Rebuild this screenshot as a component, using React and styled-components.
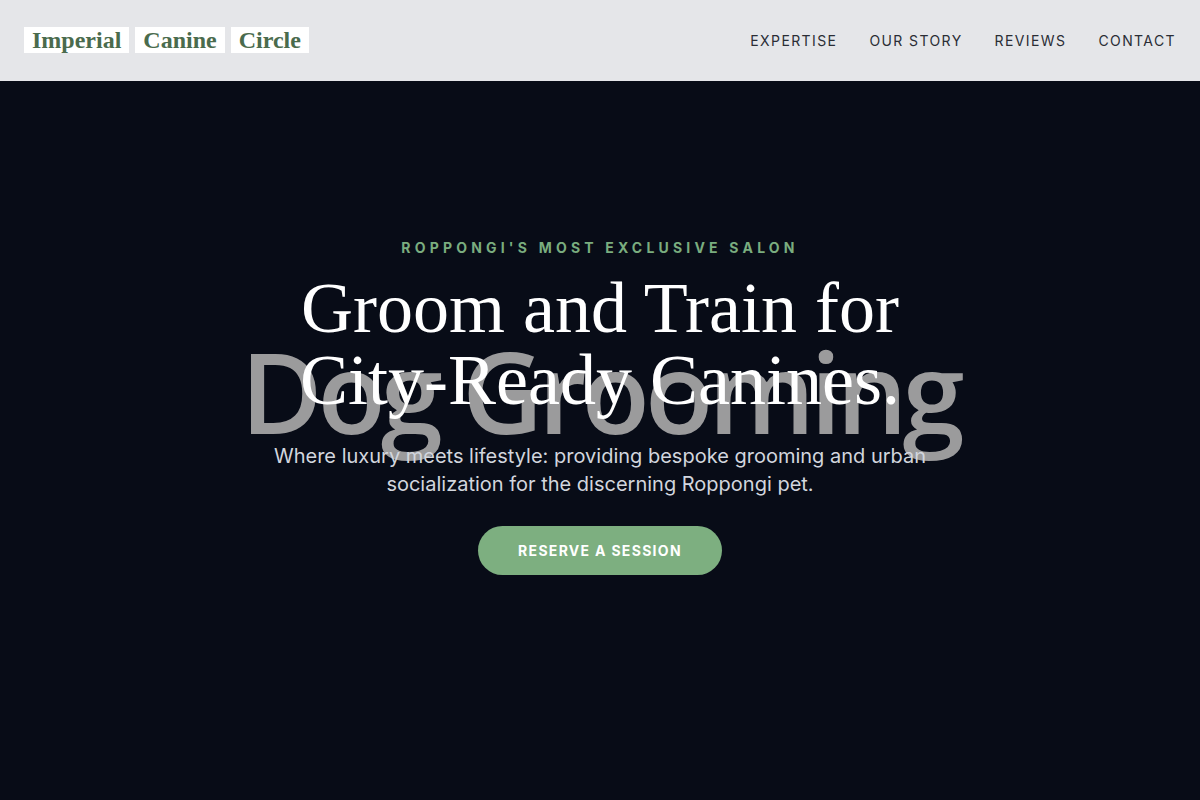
import React from "react";
import styled, { createGlobalStyle } from "styled-components";

const GlobalStyle = createGlobalStyle`
  html, body {
    margin: 0;
    padding: 0;
    background: #080c17;
  }
  * { box-sizing: border-box; }
`;

const Page = styled.div`
  min-height: 800px;
  display: flex;
  flex-direction: column;
  background: #080c17;
`;

const Header = styled.header`
  height: 81px;
  background: #e5e6e9;
  display: flex;
  align-items: center;
  justify-content: space-between;
  padding: 0 24px 1px;
`;

const Logo = styled.div`
  display: flex;
  gap: 6px;
`;

const LogoWord = styled.span`
  background: #ffffff;
  color: #4a6b4d;
  font-family: "Liberation Serif", "Times New Roman", serif;
  font-weight: 700;
  font-size: 24px;
  line-height: 26px;
  padding: 0 8px;
`;

const Nav = styled.nav`
  display: flex;
  gap: 32px;
`;

const NavLink = styled.a`
  font-family: Inter, "Liberation Sans", sans-serif;
  font-size: 14px;
  letter-spacing: 1.4px;
  color: #2a2d35;
  text-decoration: none;
  text-transform: uppercase;
`;

const Hero = styled.section`
  flex: 1;
  display: flex;
  flex-direction: column;
  align-items: center;
  padding-top: 158px;
  text-align: center;
`;

const Eyebrow = styled.div`
  font-family: Inter, "Liberation Sans", sans-serif;
  font-size: 14px;
  font-weight: 700;
  letter-spacing: 4.2px;
  color: #7aad7f;
  text-transform: uppercase;
`;

const TitleWrap = styled.div`
  position: relative;
  margin-top: 16px;
`;

/* decorative word laid behind the heading */
const Backdrop = styled.div`
  position: absolute;
  left: 50%;
  top: 63px;
  transform: translateX(-50%);
  white-space: nowrap;
  font-family: "Open Sans", "Noto Sans", sans-serif;
  font-weight: 640;
  font-size: 112px;
  line-height: 1;
  letter-spacing: -5px;
  color: #9b9b9c;
  z-index: 0;
  pointer-events: none;
`;

const Title = styled.h1`
  position: relative;
  z-index: 1;
  margin: 0;
  font-family: "Liberation Serif", "Times New Roman", serif;
  font-weight: 400;
  font-size: 72px;
  line-height: 72px;
  color: #ffffff;
`;

const Lead = styled.p`
  position: relative;
  z-index: 1;
  margin: 26px 0 0;
  max-width: 700px;
  font-family: Inter, "Liberation Sans", sans-serif;
  font-size: 20px;
  line-height: 28px;
  color: #d2d6de;
`;

const Cta = styled.button`
  margin-top: 28px;
  width: 244px;
  height: 49px;
  border: none;
  border-radius: 999px;
  background: #7daf80;
  color: #ffffff;
  font-family: Inter, "Liberation Sans", sans-serif;
  font-size: 14px;
  font-weight: 700;
  letter-spacing: 1.3px;
  text-transform: uppercase;
  cursor: pointer;
`;

const links = ["Expertise", "Our Story", "Reviews", "Contact"];

export default function App() {
  return (
    <Page>
      <GlobalStyle />
      <Header>
        <Logo>
          <LogoWord>Imperial</LogoWord>
          <LogoWord>Canine</LogoWord>
          <LogoWord>Circle</LogoWord>
        </Logo>
        <Nav>
          {links.map((l) => (
            <NavLink key={l} href="#">{l}</NavLink>
          ))}
        </Nav>
      </Header>
      <Hero>
        <Eyebrow>Roppongi's Most Exclusive Salon</Eyebrow>
        <TitleWrap>
          <Backdrop>Dog Grooming</Backdrop>
          <Title>
            Groom and Train for
            <br />
            City-Ready Canines.
          </Title>
        </TitleWrap>
        <Lead>
          Where luxury meets lifestyle: providing bespoke grooming and urban
          socialization for the discerning Roppongi pet.
        </Lead>
        <Cta>Reserve a Session</Cta>
      </Hero>
    </Page>
  );
}
